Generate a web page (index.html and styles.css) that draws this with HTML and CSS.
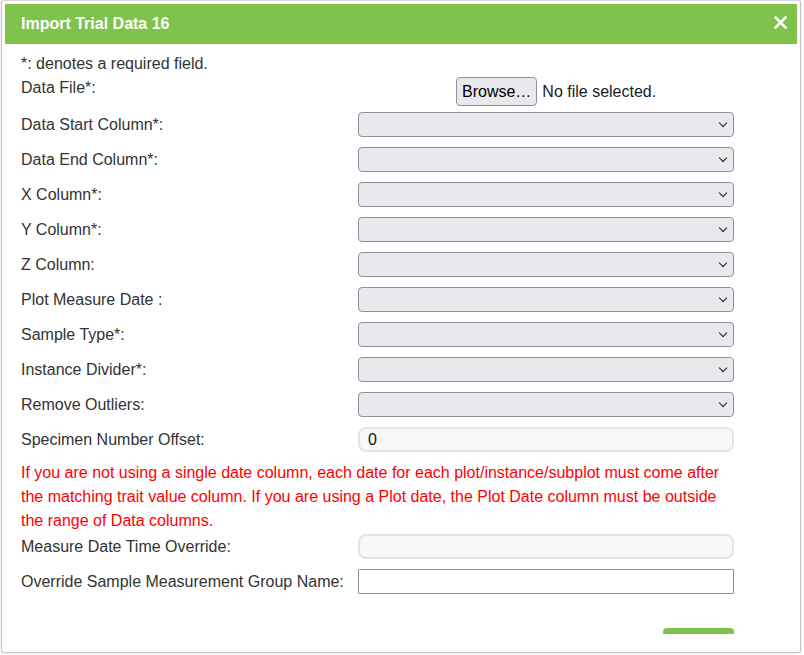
FILE: index.html
```html
<!DOCTYPE html>
<html lang="en">
<head>
    <meta charset="UTF-8">
    <meta name="viewport" content="width=device-width, initial-scale=1.0">
    <title>Import Trial Data</title>
    <link rel="stylesheet" href="styles.css">
</head>
<body>
    <div class="dialog">
        <div class="dialog-title">
            <span>Import Trial Data 16</span>
            <button class="close" aria-label="Close">
                <svg width="13" height="13" viewBox="0 0 13 13">
                    <path d="M1.5 1.5 L11.5 11.5 M11.5 1.5 L1.5 11.5" stroke="#fff" stroke-width="2.6" stroke-linecap="square"/>
                </svg>
            </button>
        </div>
        <div class="dialog-content">
            <p class="note">*: denotes a required field.</p>

            <div class="row file-row">
                <label>Data File*:</label>
                <div class="field">
                    <button class="browse">Browse…</button>
                    <span class="file-name">No file selected.</span>
                </div>
            </div>

            <div class="row">
                <label>Data Start Column*:</label>
                <div class="select-wrap"><select></select></div>
            </div>
            <div class="row">
                <label>Data End Column*:</label>
                <div class="select-wrap"><select></select></div>
            </div>
            <div class="row">
                <label>X Column*:</label>
                <div class="select-wrap"><select></select></div>
            </div>
            <div class="row">
                <label>Y Column*:</label>
                <div class="select-wrap"><select></select></div>
            </div>
            <div class="row">
                <label>Z Column:</label>
                <div class="select-wrap"><select></select></div>
            </div>
            <div class="row">
                <label>Plot Measure Date :</label>
                <div class="select-wrap"><select></select></div>
            </div>
            <div class="row">
                <label>Sample Type*:</label>
                <div class="select-wrap"><select></select></div>
            </div>
            <div class="row">
                <label>Instance Divider*:</label>
                <div class="select-wrap"><select></select></div>
            </div>
            <div class="row">
                <label>Remove Outliers:</label>
                <div class="select-wrap"><select></select></div>
            </div>
            <div class="row">
                <label>Specimen Number Offset:</label>
                <input type="text" class="soft-input" value="0">
            </div>

            <p class="warning">If you are not using a single date column, each date for each plot/instance/subplot must come after the matching trait value column. If you are using a Plot date, the Plot Date column must be outside the range of Data columns.</p>

            <div class="row measure-row">
                <label>Measure Date Time Override:</label>
                <input type="text" class="soft-input" disabled>
            </div>
            <div class="row">
                <label>Override Sample Measurement Group Name:</label>
                <input type="text" class="plain-input">
            </div>

            <div class="btns">
                <button class="btn" aria-label="Import"></button>
            </div>
        </div>
    </div>
</body>
</html>
```

FILE: styles.css
```css
* {
    margin: 0;
    padding: 0;
    box-sizing: border-box;
}

body {
    font-family: "Liberation Sans", Arial, sans-serif;
    font-size: 16px;
    color: #333;
    background: #fff;
    width: 804px;
    height: 655px;
    overflow: hidden;
}

.dialog {
    width: 800px;
    height: 653px;
    margin: 0 0 0 1px;
    border: 1px solid #c5c5c5;
    border-top-color: #d6d6d6;
    border-radius: 3px;
    padding: 3px 3px 17px;
    background: #fff;
    box-shadow: 0 0 3px rgba(0, 0, 0, 0.15);
}

.dialog-title {
    height: 40px;
    background-color: #7fc34c;
    color: #fff;
    font-weight: bold;
    display: flex;
    align-items: center;
    justify-content: space-between;
    padding: 0 10px 0 16px;
}

.close {
    background: none;
    border: none;
    width: 13px;
    height: 13px;
    display: flex;
    margin-top: -3px;
    cursor: pointer;
}

.dialog-content {
    height: 590px;
    overflow: hidden;
    padding: 8px 16px 0;
}

.note {
    line-height: 24px;
}

.row {
    display: flex;
    align-items: center;
    height: 35px;
}

.row label {
    width: 337px;
    flex-shrink: 0;
    line-height: 24px;
}

.file-row {
    height: 31px;
    align-items: flex-start;
}

.file-row .field {
    display: flex;
    align-items: center;
    margin: 1px 0 0 98px;
}

.browse {
    height: 29px;
    padding: 0 5px;
    font: inherit;
    color: #000;
    background: #e9e9ed;
    border: 1px solid #8f8f9d;
    border-radius: 4px;
}

.file-name {
    margin-left: 5px;
    color: #1b1b1b;
}

.select-wrap {
    position: relative;
    width: 376px;
    height: 25px;
}

.select-wrap select {
    appearance: none;
    -webkit-appearance: none;
    width: 100%;
    height: 100%;
    background: #e9e9ed;
    border: 1px solid #8f8f9d;
    border-radius: 4px;
    font: inherit;
}

.select-wrap::after {
    content: "";
    position: absolute;
    right: 8px;
    top: 8px;
    width: 5px;
    height: 5px;
    border-right: 1.6px solid #1c1c1c;
    border-bottom: 1.6px solid #1c1c1c;
    transform: rotate(45deg);
    pointer-events: none;
}

.soft-input {
    width: 376px;
    height: 25px;
    background: #f8f8f8;
    border: 2px solid #e4e4e4;
    border-radius: 8px;
    padding: 0 8px;
    font: inherit;
    color: #111;
}

.plain-input {
    width: 376px;
    height: 25px;
    background: #fff;
    border: 1px solid #8f8f9d;
    border-radius: 1px;
    font: inherit;
}

.warning {
    color: #ff0000;
    line-height: 24px;
    margin-top: 4px;
    max-width: 712px;
}

.measure-row {
    margin-top: -4px;
}

.btns {
    display: flex;
    justify-content: flex-end;
    padding-right: 47px;
    margin-top: 29px;
}

.btn {
    width: 71px;
    height: 34px;
    background-color: #7fc34c;
    border: none;
    border-radius: 4px;
}
```
